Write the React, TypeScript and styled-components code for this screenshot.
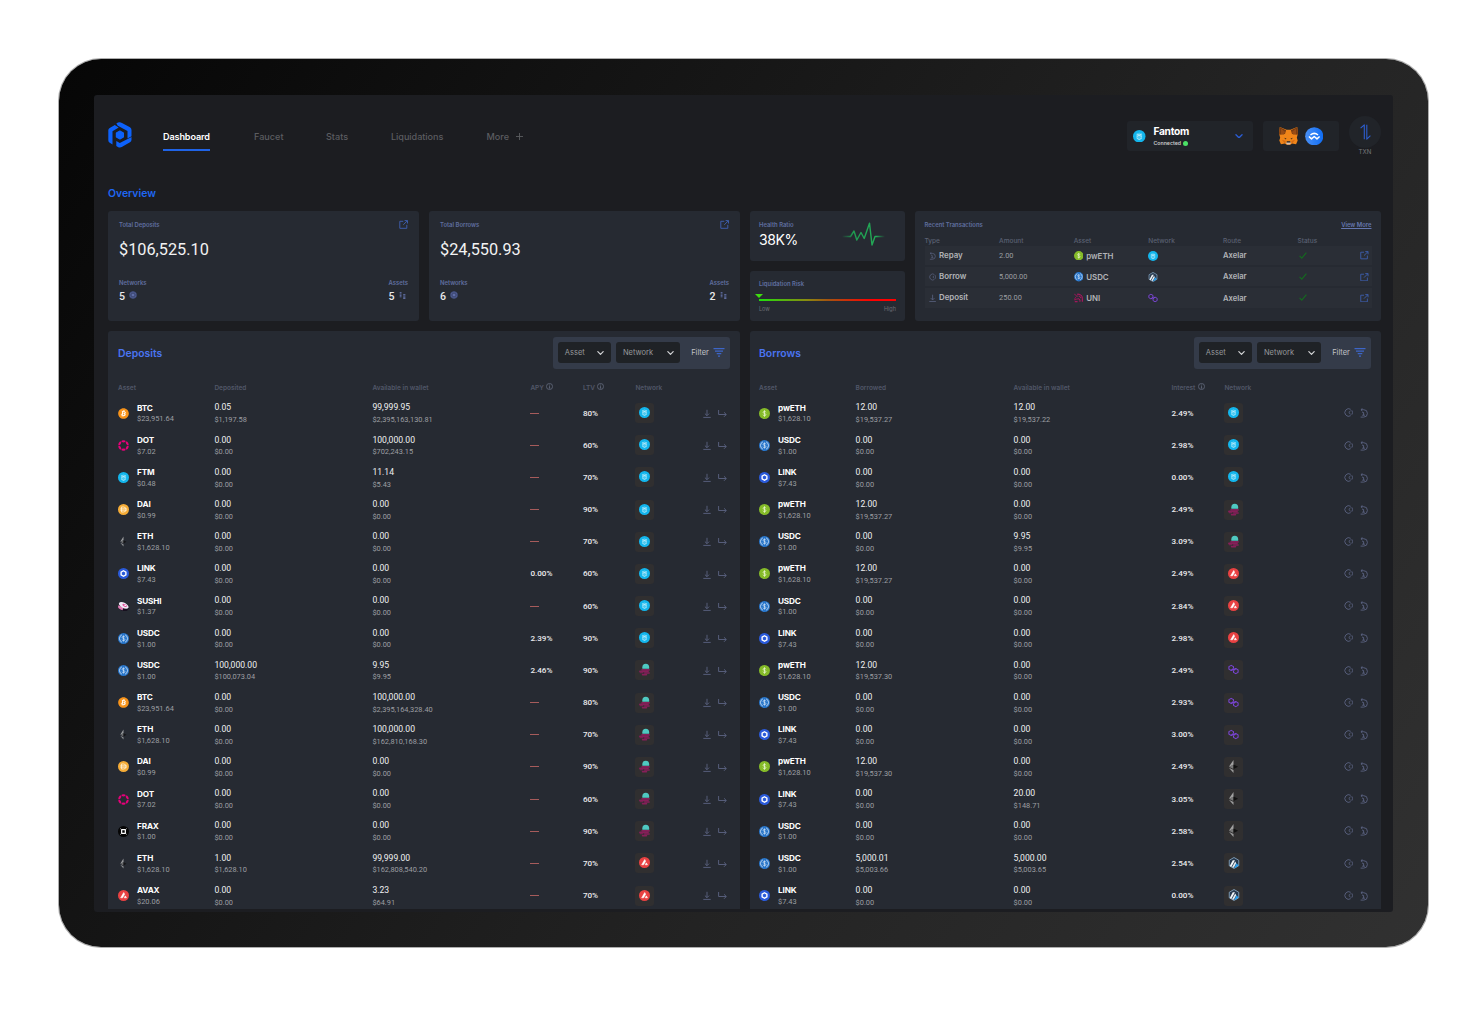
import React from "react";
import styled, { createGlobalStyle } from "styled-components";
import { FaBitcoin } from "react-icons/fa6";

const Global = createGlobalStyle`
  *, *::before, *::after { box-sizing: border-box; }
  html, body { margin: 0; background: #fff; }
  body { font-family: Inter, "Liberation Sans", sans-serif; color: #fff; overflow: hidden; }
  svg { display: block; flex: none; }
`;

const num = `font-family: Roboto, "Liberation Sans", sans-serif;`;

/* ---------- frame ---------- */

const Page = styled.div`
  width: 1480px;
  height: 1022px;
  padding: 59px 0 0 59px;
  background: #fff;
`;

const Device = styled.div`
  width: 1369px;
  height: 888px;
  padding: 36px 0 0 35px;
  border-radius: 42px;
  background: linear-gradient(124deg, #060606 0%, #141414 30%, #232323 62%, #313131 100%);
  box-shadow: 0 0 0 1px rgba(0, 0, 0, 0.32);
`;

const Screen = styled.main`
  width: 1299px;
  height: 817px;
  padding: 21px 12px 0 14px;
  border-radius: 3px;
  background: #1c1d21;
  overflow: hidden;
  display: flex;
  flex-direction: column;
`;

/* ---------- header ---------- */

const Header = styled.header`
  display: flex;
  align-items: flex-start;
  height: 66px;
`;

const LogoWrap = styled.div`
  width: 55px;
  padding-top: 6px;
`;

const Nav = styled.nav`
  display: flex;
  flex: 1;
  padding-top: 13px;
`;

const NavItem = styled.a<{ $active?: boolean; $w: number; $ls?: number }>`
  width: ${(p) => p.$w}px;
  font-size: 9.1px;
  line-height: 15px;
  white-space: nowrap;
  letter-spacing: ${(p) => p.$ls ?? 0}px;
  font-weight: ${(p) => (p.$active ? 600 : 500)};
  color: ${(p) => (p.$active ? "#fff" : "#5b5c60")};
  span {
    display: inline-flex;
    align-items: center;
    gap: 7px;
    height: 22px;
    padding-bottom: 5px;
    border-bottom: 2px solid ${(p) => (p.$active ? "#1f63e6" : "transparent")};
  }
`;

const HeaderBox = styled.div<{ $w: number; $mr: number }>`
  width: ${(p) => p.$w}px;
  height: 30px;
  margin: 5px ${(p) => p.$mr}px 0 0;
  border-radius: 3px;
  background: #212429;
  display: flex;
  align-items: center;
`;

const NetworkBox = styled(HeaderBox)`
  padding: 0 9.5px 0 6px;
`;

const WalletBox = styled(HeaderBox)`
  justify-content: center;
  gap: 7px;
`;

const NetName = styled.div`
  flex: 1;
  padding: 2px 0 0 8px;
  font-size: 10.2px;
  line-height: 12px;
  letter-spacing: -0.3px;
  font-weight: 700;
`;

const Connected = styled.div`
  display: flex;
  align-items: center;
  gap: 2px;
  font-size: 5.2px;
  line-height: 12px;
  letter-spacing: 0;
  font-weight: 600;
  color: #c9cacc;
  &::after {
    content: "";
    width: 5px;
    height: 5px;
    border-radius: 50%;
    background: #4be165;
  }
`;

const Txn = styled.div`
  width: 32px;
  display: flex;
  flex-direction: column;
  align-items: center;
  font-size: 6.2px;
  line-height: 8px;
  color: #76777b;
`;

const TxnCircle = styled.div`
  width: 32px;
  height: 32px;
  border-radius: 50%;
  background: #212429;
  display: flex;
  align-items: center;
  justify-content: center;
`;

/* ---------- overview ---------- */

const OverviewTitle = styled.h1`
  margin: 0;
  height: 29px;
  padding-top: 4.5px;
  font-size: 10.4px;
  line-height: 14px;
  font-weight: 600;
  color: #1f67f2;
`;

const CardGrid = styled.section`
  display: grid;
  grid-template-columns: 311px 311px 155px 466px;
  gap: 10px;
  height: 109.5px;
`;

const Card = styled.article`
  background: #262a32;
  border-radius: 3px;
`;

const Label = styled.div`
  font-size: 5.9px;
  line-height: 8px;
  font-weight: 600;
  color: #606fa0;
  white-space: nowrap;
`;

const TotalCard = styled(Card)`
  padding: 10px 11px 0;
`;

const Between = styled.div`
  display: flex;
  justify-content: space-between;
  align-items: flex-start;
`;

const CardLink = styled.a`
  margin: -1.5px 0 0;
`;

const BigValue = styled.div`
  ${num}
  margin: 11px 0 19px;
  font-size: 16.3px;
  line-height: 20px;
  color: #f2f2f3;
`;

const StatValue = styled.div`
  ${num}
  display: flex;
  align-items: center;
  gap: 4px;
  margin-top: 2.6px;
  font-size: 10.6px;
  line-height: 14px;
  font-weight: 500;
  color: #e9e9ea;
  svg { margin-top: -2.5px; }
`;

const Stack = styled.div`
  display: flex;
  flex-direction: column;
  gap: 10px;
`;

const HealthCard = styled(Card)`
  height: 50px;
  padding: 9.5px 20px 0 9px;
  display: flex;
  justify-content: space-between;
`;

const HealthValue = styled.div`
  font-size: 14px;
  line-height: 18px;
  margin-top: 2.5px;
  letter-spacing: -0.4px;
`;

const RiskCard = styled(Card)`
  flex: 1;
  padding: 9px 9px 0;
`;

const Marker = styled.div`
  width: 0;
  margin: 6px 0 0 -4px;
  border: 4px solid transparent;
  border-top-color: #3fdc10;
  border-bottom: 0;
`;

const RiskBar = styled.div`
  height: 2px;
  margin-top: 1px;
  background: linear-gradient(90deg, #1fe00c, #8a8a10 35%, #a35410 50%, #f00 82%, #f00);
`;

const RiskScale = styled(Between)`
  margin-top: 3.5px;
  font-size: 5.5px;
  line-height: 8px;
  color: #6b6e76;
`;

const RecentCard = styled(Card)`
  padding: 10px 9.5px 0;
`;

const ViewMore = styled(Label)`
  text-decoration: underline;
  color: #6577b0;
`;

const RecentHead = styled.div`
  display: grid;
  grid-template-columns: 74.6px 74.6px 74.6px 74.8px 74.4px 1fr;
  margin-top: 8px;
  height: 9px;
  font-size: 6.5px;
  line-height: 8px;
  font-weight: 500;
  color: #5b6172;
`;

const RecentRow = styled.div`
  display: grid;
  grid-template-columns: 74.6px 74.6px 74.6px 74.8px 76px 1fr auto;
  align-items: center;
  height: 19.2px;
  margin-bottom: 2px;
  padding-right: 3px;
  background: #2a2e36;
  font-size: 7.9px;
  font-weight: 600;
  color: #b2b4b8;
`;

const IconText = styled.div<{ $gap: number; $pl?: number }>`
  display: flex;
  align-items: center;
  gap: ${(p) => p.$gap}px;
  padding-left: ${(p) => p.$pl ?? 0}px;
`;

const TypeText = styled(IconText)`
  margin-top: -1px;
  letter-spacing: -0.05px;
`;

const TypeMark = styled.span`
  display: flex;
  justify-content: center;
  width: 7px;
  padding-top: 1.5px;
  color: #5b6382;
  svg { height: 8px; width: 7.2px; }
`;

const RecentAmount = styled.div`
  ${num}
  font-size: 7.4px;
  font-weight: 400;
  margin-top: -1.2px;
  color: #9c9ea2;
`;

const Route = styled.div`
  font-size: 7.6px;
  margin-top: 0.4px;
`;

/* ---------- tables ---------- */

const Panels = styled.section`
  display: grid;
  grid-template-columns: 632px 631px;
  gap: 10px;
  margin-top: 10px;
  height: 578.5px;
`;

const Panel = styled.article<{ $pl: number }>`
  background: #262a32;
  border-radius: 3px 3px 0 0;
  padding: 6.5px 9.8px 0 ${(p) => p.$pl}px;
  overflow: hidden;
`;

const PanelTitle = styled.h2`
  margin: 0;
  padding-top: 9.5px;
  font-size: 10.4px;
  line-height: 14px;
  font-weight: 600;
  color: #4a74f0;
`;

const Filters = styled.div`
  display: flex;
  align-items: center;
  width: 177.5px;
  height: 31.5px;
  padding: 0 5.3px;
  border-radius: 3px;
  background: #343b49;
`;

const Select = styled.div<{ $w: number }>`
  display: flex;
  align-items: center;
  justify-content: space-between;
  width: ${(p) => p.$w}px;
  height: 21px;
  margin-right: 5.5px;
  padding: 0 6.5px 0 6.8px;
  border-radius: 3px;
  background: #1f2226;
  font-size: 7.5px;
  color: #96989b;
`;

const FilterText = styled.div`
  display: flex;
  align-items: center;
  gap: 4px;
  margin-left: 5.6px;
  font-size: 7.5px;
  color: #c0c2c6;
`;

const cols = (four?: boolean) =>
  four ? "96.4px 158px 158px 52.5px 52.5px 1fr auto" : "96.6px 158px 157.8px 53px 1fr auto";

const HeadRow = styled.div<{ $four?: boolean }>`
  display: grid;
  grid-template-columns: ${(p) => cols(p.$four)};
  height: 28.6px;
  padding-top: 15.4px;
  font-size: 6.5px;
  line-height: 9px;
  font-weight: 600;
  color: #515768;
  white-space: nowrap;
`;

const HeadCell = styled.div`
  display: flex;
  gap: 2.5px;
  svg { margin-top: -0.6px; }
`;

const Row = styled.div<{ $four?: boolean }>`
  display: grid;
  grid-template-columns: ${(p) => cols(p.$four)};
  align-items: center;
  height: 32.16px;
`;

const Symbol = styled.div`
  font-size: 8.2px;
  line-height: 10px;
  font-weight: 700;
  letter-spacing: -0.15px;
  margin-top: -0.3px;
`;

const Price = styled.div`
  ${num}
  font-size: 7.45px;
  line-height: 9px;
  margin-top: 1.8px;
  color: #9d9fa2;
`;

const Amount = styled.div`
  ${num}
  font-size: 8.6px;
  line-height: 10px;
  margin-top: 0.3px;
  color: #f0f0f1;
`;

const Usd = styled(Price)`
  margin-top: 2.8px;
  font-size: 7.4px;
`;

const Pct = styled.div`
  ${num}
  font-size: 8.1px;
  font-weight: 500;
  margin-top: -1px;
  color: #ececee;
`;

const Dash = styled.div`
  width: 9px;
  height: 1px;
  background: #a65b5b;
`;

const Tile = styled.div`
  width: 18.5px;
  height: 20px;
  border-radius: 3px;
  background: #302f30;
  display: flex;
  align-items: center;
  justify-content: center;
  padding-bottom: 1px;
`;

const Actions = styled.div`
  display: flex;
  gap: 7.5px;
  padding: 0.4px 3.2px 0 0;
  color: #5b6382;
`;

/* ---------- icons ---------- */

const BtcDisc = styled.span<{ $s: number }>`
  display: flex;
  width: ${(p) => p.$s}px;
  height: ${(p) => p.$s}px;
  border-radius: 50%;
  background: radial-gradient(circle, #fff 60%, transparent 62%);
  color: #f7931a;
  flex: none;
`;

type IconProps = { s?: number };

const Svg = ({ s = 11, children }: { s?: number; children: React.ReactNode }) => (
  <svg width={s} height={s} viewBox="0 0 24 24" fill="none">{children}</svg>
);

const FTM = ({ s }: IconProps) => (
  <Svg s={s}>
    <circle cx="12" cy="12" r="12" fill="#13b5ec" />
    <path d="M7.500 7.500L12 5l4.500 2.500v9L12 19l-4.500-2.500z" fill="#4ccaf2" />
    <path d="M7.500 7.500l9 5M16.500 7.500l-9 5M7.500 16l4.500 2.500 4.500-2.500" stroke="#c4eefb" strokeWidth="1.500" />
    <path d="M7.500 7.500v9M16.500 7.500v9" stroke="#9fe3f8" strokeWidth="1.100" />
  </Svg>
);
const BTC = ({ s = 11 }: IconProps) => <BtcDisc $s={s}><FaBitcoin size={s} /></BtcDisc>;
const DOT = ({ s }: IconProps) => (
  <Svg s={s}>
    <g fill="#e6007a">
      <ellipse cx="12" cy="2.800" rx="4.600" ry="2.400" />
      <ellipse cx="12" cy="21.200" rx="4.600" ry="2.400" />
      {[60, 120, 240, 300].map((a) => (
        <ellipse key={a} cx="12" cy="2.700" rx="4.600" ry="2.300" transform={`rotate(${a} 12 12)`} />
      ))}
    </g>
  </Svg>
);
const DAI = ({ s }: IconProps) => (
  <Svg s={s}>
    <circle cx="12" cy="12" r="12" fill="#f5ac37" />
    <path d="M7.500 6.500h4.500a5.500 5.500 0 0 1 0 11H7.500zM5 10.500h14M5 13.500h14" stroke="#fff3dc" strokeWidth="1.700" />
  </Svg>
);
const ETH = ({ s = 13 }: IconProps) => (
  <Svg s={s}>
    <path d="M12 0L3.500 12.500 12 9z" fill="#a2a2a2" />
    <path d="M12 8.500l-8.500 4 8.500 4z" fill="#777" />
    <path d="M12 8.500l8.500 4-8.500 4z" fill="#111" />
    <path d="M3.500 14.500L12 24v-5.500z" fill="#9c9c9c" />
  </Svg>
);
const ETHSmall = ({ s = 11 }: IconProps) => (
  <Svg s={s}>
    <path d="M12 1L5 12.500 12 9.500z" fill="#9c9ea0" />
    <path d="M12 9.500l-7 3 7 3.800z" fill="#686a6c" />
    <path d="M12 9l6.500 3.500-6.500 4z" fill="#141517" />
    <path d="M5 14.500l7 8.500v-5z" fill="#8d8f92" />
  </Svg>
);
const LINK = ({ s }: IconProps) => (
  <Svg s={s}>
    <circle cx="12" cy="12" r="12" fill="#2a5ada" />
    <path d="M12 6l5.200 3v6L12 18l-5.200-3V9z" stroke="#fff" strokeWidth="3" />
  </Svg>
);
const SUSHI = ({ s }: IconProps) => (
  <Svg s={s}>
    <path d="M3 8l-2 6c1 6 15 10 19 7l4-6z" fill="#17101f" />
    <path d="M1 9l-1 4c0 3 6 6 10 7l2-6z" fill="#e07bb4" />
    <ellipse cx="12.500" cy="9.500" rx="11.500" ry="6" transform="rotate(28 12.500 9.500)" fill="#efe9f6" />
    <ellipse cx="14.500" cy="9.500" rx="5.500" ry="2.600" transform="rotate(28 14.500 9.500)" fill="#e0559e" />
    <ellipse cx="15.500" cy="9.500" rx="2.200" ry="1.200" transform="rotate(28 15.500 9.500)" fill="#fff" />
  </Svg>
);
const USDC = ({ s }: IconProps) => (
  <Svg s={s}>
    <circle cx="12" cy="12" r="12" fill="#2775ca" />
    <path d="M8.500 4a8.700 8.700 0 0 0 0 16M15.500 4a8.700 8.700 0 0 1 0 16" stroke="#d6e6f7" strokeWidth="1.800" />
    <path d="M15 9.300c-.4-1.400-1.500-2-3-2-1.700 0-3 .8-3 2.200 0 3.200 6.100 1.600 6.100 5 0 1.500-1.400 2.300-3.100 2.300-1.600 0-2.900-.8-3.200-2.300M12 5.500v13" stroke="#d6e6f7" strokeWidth="1.500" />
  </Svg>
);
const PWETH = ({ s }: IconProps) => (
  <Svg s={s}>
    <circle cx="12" cy="12" r="12" fill="#85bb29" />
    <path d="M15 9.300c-.4-1.400-1.500-2-3-2-1.700 0-3 .8-3 2.200 0 3.200 6.100 1.600 6.100 5 0 1.500-1.400 2.300-3.100 2.300-1.600 0-2.900-.8-3.200-2.300M12 5v14" stroke="#e9f5cf" strokeWidth="1.800" />
  </Svg>
);
const FRAX = ({ s }: IconProps) => (
  <Svg s={s}>
    <circle cx="12" cy="12" r="12" fill="#050505" />
    <path d="M7.500 8h9M7.500 16h9M8 7.500v9M16 7.500v9" stroke="#fff" strokeWidth="2.600" />
    <path d="M5 5.500l3 2.500M19 5.500L16 8M5 18.500L8 16M19 18.500L16 16" stroke="#fff" strokeWidth="1.500" />
  </Svg>
);
const AVAX = ({ s }: IconProps) => (
  <Svg s={s}>
    <circle cx="12" cy="12" r="12" fill="#e84142" />
    <path d="M12.500 5.500l2 3.500-4.600 8H5.800z" fill="#fff" stroke="#fff" strokeWidth="1.200" strokeLinejoin="round" />
    <path d="M16 12.800l2.500 4.200h-5z" fill="#fff" stroke="#fff" strokeWidth="1.200" strokeLinejoin="round" />
  </Svg>
);
const UNI = ({ s }: IconProps) => (
  <Svg s={s}>
    <path d="M1 2c3 5 6 6 9 6M6 9c-3 3-5 6-4 9 2-2 4-3 7-3" stroke="#b80f60" strokeWidth="2" />
    <path d="M8 3c7-1 13 3 13 10v9M9 15c4-1 7 1 6 7M12 8c3 0 5 2 5 5M2 22h7" stroke="#c91068" strokeWidth="2.400" />
  </Svg>
);
const POLYGON = ({ s }: IconProps) => (
  <Svg s={s}>
    <path d="M12 9.500V5.800L7 3 2 5.800v5.400L7 14l10-4 5 2.800v5.400L17 21l-5-2.800v-3.700" stroke="#7b45d6" strokeWidth="2.300" strokeLinejoin="round" />
    <path d="M7 14l5-4.500M12 14.500L17 10" stroke="#7b45d6" strokeWidth="2.300" />
  </Svg>
);
const ARB = ({ s }: IconProps) => (
  <Svg s={s}>
    <path d="M12 1l9.500 5.500v11L12 23l-9.500-5.500v-11z" fill="#26384d" stroke="#8fb0cd" strokeWidth="1.600" />
    <path d="M9.500 6.500h4.500L6.500 20 3.500 18z" fill="#f2f5f8" />
    <path d="M14.500 9l2 3.500-5 9-3.500-1.200z" fill="#e4ecf3" />
    <path d="M17 12.500l4 4.500-7 5-1.500-.5z" fill="#28a0f0" />
  </Svg>
);
const MOON = ({ s = 13 }: IconProps) => (
  <Svg s={s}>
    <path d="M8 10.500V8a6.300 6.800 0 0 1 12.600 0v2.500z" fill="#4fc9c1" />
    <g fill="#861f59">
      <rect x="6" y="11.300" width="16" height="3" rx="1.500" />
      <rect x="2" y="14" width="18" height="3.200" rx="1.600" />
      <rect x="3" y="17" width="7" height="1.800" rx=".9" />
      <rect x="11" y="17" width="11" height="3" rx="1.500" />
      <rect x="7" y="19.800" width="10" height="3.200" rx="1.500" />
    </g>
  </Svg>
);

const icons = { FTM, BTC, DOT, DAI, ETH, LINK, SUSHI, USDC, PWETH, FRAX, AVAX, UNI, POLYGON, ARB, MOON };
type IconName = keyof typeof icons;

const Logo = () => (
  <svg width="24" height="26" viewBox="0 0 24 26">
    <path d="M8.300 1.400Q11.300 -.6 14 .9L22 5.300Q23.500 6.200 23.500 8v6.200l-4 2.400V8.900L9.800 3.700z" fill="#0d62fb" />
    <path d="M6.800 2.900l3.900 2.600-6.200 3.800v13.200L1.700 20.800Q.3 20 .3 18.300V8.300Q.3 6.800 1.700 6z" fill="#0d62fb" />
    <path d="M8.300 19l3.500 1.900L23.500 14.900v2.800Q23.500 19.300 22 20.200l-7.800 4.500Q12 26.200 9.900 24.900l-1.600-1z" fill="#0d62fb" />
    <path d="M11.900 9l3.500 2v4l-3.500 2-3.500-2v-4z" fill="#0d62fb" stroke="#0d62fb" strokeWidth="1.200" strokeLinejoin="round" />
  </svg>
);

const Fox = () => (
  <svg width="19" height="18" viewBox="0 0 20 19">
    <path d="M.8 0L8 3h4L19.200 0l.8 6.500-1.200 4.800.9 3-1.700 4-4.300-1L12 18.800H8l-1.700-1.500-4.300 1-1.700-4 .9-3L0 6.500z" fill="#f08519" />
    <path d="M.8 0L7.500 3.300 6.300 7.500.5 8.300 0 6.500zM19.200 0l-6.700 3.300 1.200 4.200 5.800.8.500-1.800z" fill="#7a3d12" />
    <path d="M2 1.700L6.500 5.200 5 7.800 2 7.500zM18 1.700l-4.500 3.500L15 7.800l3-.3z" fill="#9a4c14" />
    <path d="M5.300 11.300l2.500.9-.6 1.100zM14.700 11.300l-2.500.9.600 1.100z" fill="#33251c" />
    <path d="M8 15.500h4l.4 2-1 1H8.600l-1-1z" fill="#d7c1b3" />
    <path d="M8.200 15h3.600l.3 1.400H7.900z" fill="#1d1d1f" />
    <path d="M3 13.500l4 1.300-.7 2.500zM17 13.500l-4 1.300.7 2.500z" fill="#d56a14" />
  </svg>
);

const WalletConnect = () => (
  <svg width="18.500" height="18.500" viewBox="0 0 19 19">
    <defs>
      <linearGradient id="wc" x1="0" x2="1"><stop stopColor="#4a90f5" /><stop offset="1" stopColor="#0f6df5" /></linearGradient>
    </defs>
    <circle cx="9.500" cy="9.500" r="9.300" fill="url(#wc)" />
    <path d="M5.600 8.200q3.900-3.300 7.800 0" fill="none" stroke="#fff" strokeWidth="1.500" />
    <path d="M4 9.700l2.700 2.500 2.800-2.500 2.800 2.500L15 9.700" fill="none" stroke="#fff" strokeWidth="1.500" strokeLinejoin="round" />
  </svg>
);

const External = ({ c = "#3f62b5", s = 9 }: { c?: string; s?: number }) => (
  <svg width={s} height={s} viewBox="0 0 9 9" fill="none" stroke={c} strokeWidth="0.9">
    <path d="M4.300 1.300H.8v7h7V4.800M5.600.6h2.900v2.900M8.300.8L4.200 4.900" />
  </svg>
);

const Chevron = ({ c, w = 8 }: { c: string; w?: number }) => (
  <svg width={w} height={w * 0.6} viewBox="0 0 10 6" fill="none" stroke={c} strokeWidth="1.700" strokeLinecap="round" strokeLinejoin="round">
    <path d="M1.200 1l3.800 3.800L8.800 1" />
  </svg>
);

const Swap = () => (
  <svg width="11" height="16" viewBox="0 0 11 16" fill="none" stroke="#2d5ed0" strokeWidth="1.100" strokeLinejoin="round">
    <path d="M.6 4.200L4.300.8v14.500M10.400 11.600L6.800 15.200V.8" />
  </svg>
);

const Globe = () => (
  <svg width="8" height="8" viewBox="0 0 8 8">
    <circle cx="4" cy="4" r="3.800" fill="#3b4670" />
    <path d="M4 .8L6.900 2.400v3.200L4 7.200 1.100 5.600V2.400zM1.100 2.400l5.800 3.200M6.900 2.400L1.100 5.600M4 .8v6.400" stroke="#5a69a0" strokeWidth=".5" fill="none" />
    <circle cx="4" cy="4" r="1.100" fill="#6474ac" />
  </svg>
);

const Coins = () => (
  <svg width="7" height="7" viewBox="0 0 7 7" fill="none" stroke="#5f6da0" strokeWidth="1">
    <path d="M.7.600h1.800M.7 2h1.800M.7 3.400h1.800M.7 4.800h1.800M4.200 2.600h2.200M4.200 4h2.200M4.200 5.300h2.200M4.200 6.500h2.200" />
  </svg>
);

const Pulse = () => (
  <svg width="43" height="26" viewBox="0 -1 43 26" fill="none">
    <defs>
      <linearGradient id="pl" gradientUnits="userSpaceOnUse" x1="0" y1="0" x2="43" y2="0">
        <stop stopColor="#1e9a4f" stopOpacity="0" /><stop offset=".25" stopColor="#1e9a4f" />
        <stop offset=".8" stopColor="#23ab57" /><stop offset="1" stopColor="#1e9a4f" stopOpacity="0" />
      </linearGradient>
    </defs>
    <path d="M0 14.500h8.500l3.500-5.500 2.800 9 4.200-7.500 3.200 6L27.500 1.200l2.500 21.800 3-8.500H43" stroke="url(#pl)" strokeWidth="1.400" strokeLinejoin="round" />
  </svg>
);

const Check = () => (
  <svg width="8" height="7" viewBox="0 0 8 7" fill="none" stroke="#146b1f" strokeWidth="1.100">
    <path d="M.6 3.800l2.200 2.300L7.400.6" />
  </svg>
);

const FilterIcon = () => (
  <svg width="12" height="9" viewBox="0 0 12 9" stroke="#3d66c8" strokeWidth="1.200">
    <path d="M.5.700h11M2 3.200h8M3.700 5.700h4.600M5 8.200h2" />
  </svg>
);

const Info = () => (
  <svg width="7" height="7" viewBox="0 0 8 8" fill="none" stroke="#6c7386" strokeWidth=".8">
    <circle cx="4" cy="4" r="3.500" /><path d="M4 1.800v1M3.400 3.700H4v2.200M3.200 5.900h1.700" />
  </svg>
);

const Download = () => (
  <svg width="8" height="9" viewBox="0 0 8 9" fill="none" stroke="currentColor" strokeWidth=".9">
    <path d="M4 .8v5.700M1.900 4.600L4 6.700l2.100-2.100M.3 8.400h7.400" />
  </svg>
);
const TurnRight = () => (
  <svg width="9" height="9" viewBox="0 0 9 9" fill="none" stroke="currentColor" strokeWidth=".9">
    <path d="M.6 1v4.500h7.500M6 3.300l2.300 2.200L6 7.800" />
  </svg>
);
const BorrowIcon = () => (
  <svg width="9" height="9" viewBox="0 0 9 9" fill="none" stroke="currentColor" strokeWidth=".9">
    <path d="M6.700 1.300A3.800 3.800 0 1 0 6.700 7.700M7.800 2.300a3.800 3.800 0 0 1 0 4.400M6.600 2.800L4.800 4.500l1.800 1.700" />
  </svg>
);
const RepayIcon = () => (
  <svg width="8" height="10" viewBox="0 0 8 10" fill="none" stroke="currentColor" strokeWidth=".9">
    <path d="M2.500.3L.9 1.700l1.600 1.500M1 1.700h2.700a3.700 3.700 0 0 1 0 7.400H.6M2.300 4.500h1.300v2.700M2.200 7.200h2.700" />
  </svg>
);

/* ---------- data ---------- */

type DepositRow = [IconName, string, string, string, string, string, string, string | null, string, IconName];
const deposits: DepositRow[] = [
  ["BTC", "BTC", "$23,951.64", "0.05", "$1,197.58", "99,999.95", "$2,395,163,130.81", null, "80%", "FTM"],
  ["DOT", "DOT", "$7.02", "0.00", "$0.00", "100,000.00", "$702,243.15", null, "60%", "FTM"],
  ["FTM", "FTM", "$0.48", "0.00", "$0.00", "11.14", "$5.43", null, "70%", "FTM"],
  ["DAI", "DAI", "$0.99", "0.00", "$0.00", "0.00", "$0.00", null, "90%", "FTM"],
  ["ETH", "ETH", "$1,628.10", "0.00", "$0.00", "0.00", "$0.00", null, "70%", "FTM"],
  ["LINK", "LINK", "$7.43", "0.00", "$0.00", "0.00", "$0.00", "0.00%", "60%", "FTM"],
  ["SUSHI", "SUSHI", "$1.37", "0.00", "$0.00", "0.00", "$0.00", null, "60%", "FTM"],
  ["USDC", "USDC", "$1.00", "0.00", "$0.00", "0.00", "$0.00", "2.39%", "90%", "FTM"],
  ["USDC", "USDC", "$1.00", "100,000.00", "$100,073.04", "9.95", "$9.95", "2.46%", "90%", "MOON"],
  ["BTC", "BTC", "$23,951.64", "0.00", "$0.00", "100,000.00", "$2,395,164,328.40", null, "80%", "MOON"],
  ["ETH", "ETH", "$1,628.10", "0.00", "$0.00", "100,000.00", "$162,810,168.30", null, "70%", "MOON"],
  ["DAI", "DAI", "$0.99", "0.00", "$0.00", "0.00", "$0.00", null, "90%", "MOON"],
  ["DOT", "DOT", "$7.02", "0.00", "$0.00", "0.00", "$0.00", null, "60%", "MOON"],
  ["FRAX", "FRAX", "$1.00", "0.00", "$0.00", "0.00", "$0.00", null, "90%", "MOON"],
  ["ETH", "ETH", "$1,628.10", "1.00", "$1,628.10", "99,999.00", "$162,808,540.20", null, "70%", "AVAX"],
  ["AVAX", "AVAX", "$20.06", "0.00", "$0.00", "3.23", "$64.91", null, "70%", "AVAX"],
];

type BorrowRow = [IconName, string, string, string, string, string, string, string, IconName];
const borrows: BorrowRow[] = [
  ["PWETH", "pwETH", "$1,628.10", "12.00", "$19,537.27", "12.00", "$19,537.22", "2.49%", "FTM"],
  ["USDC", "USDC", "$1.00", "0.00", "$0.00", "0.00", "$0.00", "2.98%", "FTM"],
  ["LINK", "LINK", "$7.43", "0.00", "$0.00", "0.00", "$0.00", "0.00%", "FTM"],
  ["PWETH", "pwETH", "$1,628.10", "12.00", "$19,537.27", "0.00", "$0.00", "2.49%", "MOON"],
  ["USDC", "USDC", "$1.00", "0.00", "$0.00", "9.95", "$9.95", "3.09%", "MOON"],
  ["PWETH", "pwETH", "$1,628.10", "12.00", "$19,537.27", "0.00", "$0.00", "2.49%", "AVAX"],
  ["USDC", "USDC", "$1.00", "0.00", "$0.00", "0.00", "$0.00", "2.84%", "AVAX"],
  ["LINK", "LINK", "$7.43", "0.00", "$0.00", "0.00", "$0.00", "2.98%", "AVAX"],
  ["PWETH", "pwETH", "$1,628.10", "12.00", "$19,537.30", "0.00", "$0.00", "2.49%", "POLYGON"],
  ["USDC", "USDC", "$1.00", "0.00", "$0.00", "0.00", "$0.00", "2.93%", "POLYGON"],
  ["LINK", "LINK", "$7.43", "0.00", "$0.00", "0.00", "$0.00", "3.00%", "POLYGON"],
  ["PWETH", "pwETH", "$1,628.10", "12.00", "$19,537.30", "0.00", "$0.00", "2.49%", "ETH"],
  ["LINK", "LINK", "$7.43", "0.00", "$0.00", "20.00", "$148.71", "3.05%", "ETH"],
  ["USDC", "USDC", "$1.00", "0.00", "$0.00", "0.00", "$0.00", "2.58%", "ETH"],
  ["USDC", "USDC", "$1.00", "5,000.01", "$5,003.66", "5,000.00", "$5,003.65", "2.54%", "ARB"],
  ["LINK", "LINK", "$7.43", "0.00", "$0.00", "0.00", "$0.00", "0.00%", "ARB"],
];

const recent: [React.ComponentType, string, string, IconName, string, IconName][] = [
  [RepayIcon, "Repay", "2.00", "PWETH", "pwETH", "FTM"],
  [BorrowIcon, "Borrow", "5,000.00", "USDC", "USDC", "ARB"],
  [Download, "Deposit", "250.00", "UNI", "UNI", "POLYGON"],
];

/* ---------- parts ---------- */

const AssetCell = ({ icon, name, price }: { icon: IconName; name: string; price: string }) => {
  const Icon = icon === "ETH" ? ETHSmall : icons[icon];
  return (
    <IconText $gap={8}>
      <Icon s={11} />
      <div><Symbol>{name}</Symbol><Price>{price}</Price></div>
    </IconText>
  );
};

const AmountCell = ({ v, usd }: { v: string; usd: string }) => (
  <div><Amount>{v}</Amount><Usd>{usd}</Usd></div>
);

const NetworkTile = ({ net }: { net: IconName }) => {
  const Icon = icons[net];
  const size = net === "MOON" || net === "ETH" ? 13 : net === "ARB" ? 12 : 11;
  return <Tile><Icon s={size} /></Tile>;
};

const TotalBlock = ({ title, value, nets, assets }: { title: string; value: string; nets: number; assets: number }) => (
  <TotalCard>
    <Between><Label>{title}</Label><CardLink><External /></CardLink></Between>
    <BigValue>{value}</BigValue>
    <Between>
      <div><Label>Networks</Label><StatValue>{nets}<Globe /></StatValue></div>
      <div><Label>Assets</Label><StatValue>{assets}<Coins /></StatValue></div>
    </Between>
  </TotalCard>
);

const PanelTop = ({ title }: { title: string }) => (
  <Between>
    <PanelTitle>{title}</PanelTitle>
    <Filters>
      <Select $w={53}>Asset<Chevron c="#d5d6d8" w={7} /></Select>
      <Select $w={64.5}>Network<Chevron c="#d5d6d8" w={7} /></Select>
      <FilterText>Filter<FilterIcon /></FilterText>
    </Filters>
  </Between>
);

export default function App() {
  return (
    <Page>
      <Global />
      <Device>
        <Screen>
          <Header>
            <LogoWrap><Logo /></LogoWrap>
            <Nav>
              <NavItem $w={91} $active $ls={-0.12}><span>Dashboard</span></NavItem>
              <NavItem $w={72}><span>Faucet</span></NavItem>
              <NavItem $w={65}><span>Stats</span></NavItem>
              <NavItem $w={95.5} $ls={-0.05}><span>Liquidations</span></NavItem>
              <NavItem $w={60}>
                <span>
                  More
                  <svg width="7" height="7" viewBox="0 0 7 7" stroke="#5b5c60" strokeWidth="0.9"><path d="M3.500 0v7M0 3.500h7" /></svg>
                </span>
              </NavItem>
            </Nav>
            <NetworkBox $w={125.500} $mr={10.500}>
              <FTM s={12.500} />
              <NetName>Fantom<Connected>Connected</Connected></NetName>
              <Chevron c="#2a5bd0" w={8} />
            </NetworkBox>
            <WalletBox $w={75.500} $mr={10.500}><Fox /><WalletConnect /></WalletBox>
            <Txn><TxnCircle><Swap /></TxnCircle>TXN</Txn>
          </Header>

          <OverviewTitle>Overview</OverviewTitle>

          <CardGrid>
            <TotalBlock title="Total Deposits" value="$106,525.10" nets={5} assets={5} />
            <TotalBlock title="Total Borrows" value="$24,550.93" nets={6} assets={2} />
            <Stack>
              <HealthCard>
                <div><Label>Health Ratio</Label><HealthValue>38K%</HealthValue></div>
                <Pulse />
              </HealthCard>
              <RiskCard>
                <Label>Liquidation Risk</Label>
                <Marker />
                <RiskBar />
                <RiskScale><span>Low</span><span>High</span></RiskScale>
              </RiskCard>
            </Stack>
            <RecentCard>
              <Between><Label>Recent Transactions</Label><ViewMore>View More</ViewMore></Between>
              <RecentHead>
                <span>Type</span><span>Amount</span><span>Asset</span><span>Network</span><span>Route</span><span>Status</span>
              </RecentHead>
              {recent.map(([TypeIcon, type, amount, asset, name, net]) => {
                const A = icons[asset];
                const N = icons[net];
                return (
                  <RecentRow key={type}>
                    <TypeText $gap={2.800} $pl={4.800}><TypeMark><TypeIcon /></TypeMark>{type}</TypeText>
                    <RecentAmount>{amount}</RecentAmount>
                    <IconText $gap={3}><A s={9.500} />{name}</IconText>
                    <N s={10} />
                    <Route>Axelar</Route>
                    <Check />
                    <External s={8.500} />
                  </RecentRow>
                );
              })}
            </RecentCard>
          </CardGrid>

          <Panels>
            <Panel $pl={10}>
              <PanelTop title="Deposits" />
              <HeadRow $four>
                <HeadCell>Asset</HeadCell><HeadCell>Deposited</HeadCell><HeadCell>Available in wallet</HeadCell>
                <HeadCell>APY<Info /></HeadCell><HeadCell>LTV<Info /></HeadCell><HeadCell>Network</HeadCell>
              </HeadRow>
              {deposits.map(([icon, name, price, v, usd, w, wusd, apy, ltv, net], i) => (
                <Row $four key={i}>
                  <AssetCell icon={icon} name={name} price={price} />
                  <AmountCell v={v} usd={usd} />
                  <AmountCell v={w} usd={wusd} />
                  {apy ? <Pct>{apy}</Pct> : <Dash />}
                  <Pct>{ltv}</Pct>
                  <NetworkTile net={net} />
                  <Actions><Download /><TurnRight /></Actions>
                </Row>
              ))}
            </Panel>
            <Panel $pl={9}>
              <PanelTop title="Borrows" />
              <HeadRow>
                <HeadCell>Asset</HeadCell><HeadCell>Borrowed</HeadCell><HeadCell>Available in wallet</HeadCell>
                <HeadCell>Interest<Info /></HeadCell><HeadCell>Network</HeadCell>
              </HeadRow>
              {borrows.map(([icon, name, price, v, usd, w, wusd, rate, net], i) => (
                <Row key={i}>
                  <AssetCell icon={icon} name={name} price={price} />
                  <AmountCell v={v} usd={usd} />
                  <AmountCell v={w} usd={wusd} />
                  <Pct>{rate}</Pct>
                  <NetworkTile net={net} />
                  <Actions><BorrowIcon /><RepayIcon /></Actions>
                </Row>
              ))}
            </Panel>
          </Panels>
        </Screen>
      </Device>
    </Page>
  );
}
